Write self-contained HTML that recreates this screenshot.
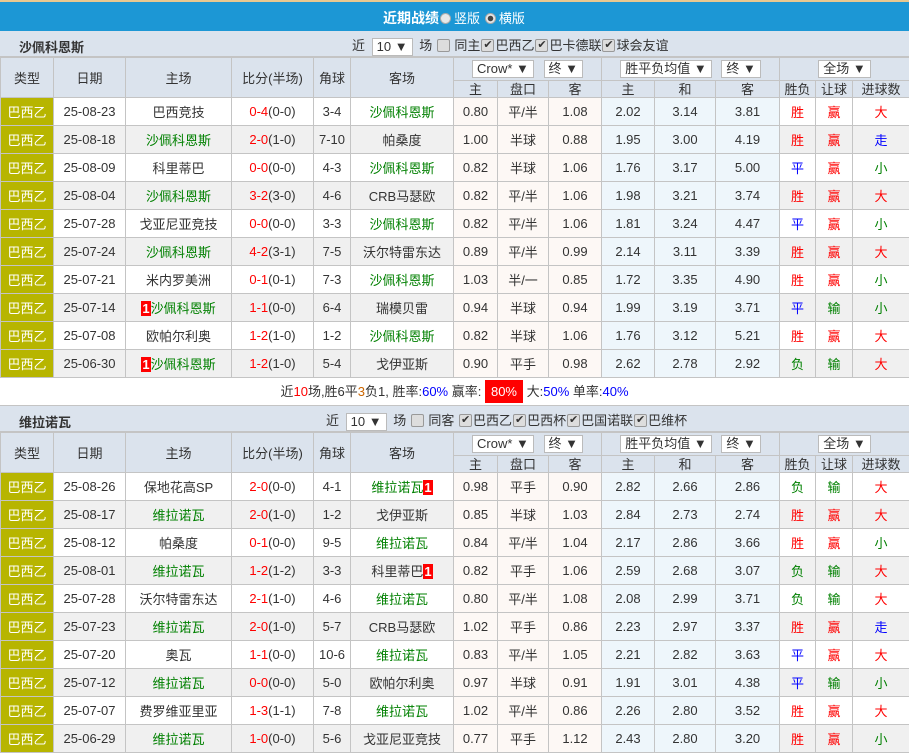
<!DOCTYPE html>
<html><head><meta charset="utf-8"><style>
*{margin:0;padding:0;box-sizing:border-box}
body{width:909px;height:755px;overflow:hidden;background:#fff;font-family:"Liberation Sans","Noto Sans CJK SC",sans-serif;font-size:13px;color:#333}
.top{height:31px;background:#1c97d5;border-top:2px solid #e8c890;color:#fff;font-weight:bold;font-size:14px;position:relative}
.top .t{position:absolute;left:383px;top:6px;white-space:nowrap}
.top .n{font-weight:normal;font-size:13px}
.rad{display:inline-block;width:11px;height:11px;border-radius:50%;background:#e8e8e8;border:1px solid #aaa;vertical-align:-1px;margin:0 3px 0 1px}
.rad.on{background:radial-gradient(circle,#444 0 2.5px,#e8e8e8 3px)}
.sec{height:26px;background:#dbe3ed;position:relative;border-bottom:1px solid #c4c4c4}
.sec .nm{position:absolute;left:19px;top:6px;font-weight:bold;color:#333;font-size:13px}
.sec .opt{position:absolute;top:4px;white-space:nowrap;font-size:13px}
.sel{display:inline-block;background:#fff;border:1px solid #bbb;height:18px;line-height:16px;padding:0 4px;font-size:13px;vertical-align:middle;margin:0 3px}
.cb{display:inline-block;width:13px;height:13px;border:1px solid #999;border-radius:2px;background:#ddd;vertical-align:-2px;font-size:11px;line-height:11px;text-align:center;color:#333;margin:0 1px;overflow:hidden}
table{border-collapse:collapse;table-layout:fixed;width:909px}
td{border:1px solid #c4c4c4;text-align:center;height:28px;white-space:nowrap;overflow:hidden;padding:0}
tr.h td{background:#dbe3ed;height:23px}
tr.h2 td{background:#dbe3ed;height:17px;line-height:15px}
tr.g td{background:#f0f0f0}
td.ty{background:#b7b500!important;color:#fff}
td.p{background:#fdf8f5!important}
td.b{background:#eef6fb!important}
.gr{color:#008000}.r{color:#f00}.bl{color:#00f}
.bd{background:#f00;color:#fff;font-weight:bold;padding:0 1px}
.sum{height:28px;line-height:28px;text-align:center;border-bottom:1px solid #c4c4c4;font-size:13px}
.sum .rb{background:#f00;color:#fff;padding:4px 6px}
</style></head><body>
<div class="top"><div class="t">近期战绩<span class="rad"></span><span class="n">竖版</span> <span class="rad on"></span><span class="n">横版</span></div></div>
<div class="sec"><span class="nm">沙佩科恩斯</span><span class="opt" style="left:352px">近 <span class="sel">10 ▼</span> 场 <span class="cb"></span> 同主<span class="cb">✔</span>巴西乙<span class="cb">✔</span>巴卡德联<span class="cb">✔</span>球会友谊</span></div>
<table>
<colgroup><col style="width:53px"><col style="width:72px"><col style="width:106px"><col style="width:82px"><col style="width:37px"><col style="width:103px"><col style="width:44px"><col style="width:51px"><col style="width:53px"><col style="width:53px"><col style="width:61px"><col style="width:64px"><col style="width:36px"><col style="width:37px"><col style="width:57px"></colgroup>
<tr class="h"><td rowspan="2">类型</td><td rowspan="2">日期</td><td rowspan="2">主场</td><td rowspan="2">比分(半场)</td><td rowspan="2">角球</td><td rowspan="2">客场</td><td colspan="3"><span class="sel">Crow* ▼</span> <span class="sel">终 ▼</span></td><td colspan="3"><span class="sel">胜平负均值 ▼</span> <span class="sel">终 ▼</span></td><td colspan="3"><span class="sel">全场 ▼</span></td></tr>
<tr class="h2"><td>主</td><td>盘口</td><td>客</td><td>主</td><td>和</td><td>客</td><td>胜负</td><td>让球</td><td>进球数</td></tr>
<tr><td class="ty">巴西乙</td><td>25-08-23</td><td>巴西竞技</td><td><span class="r">0-4</span>(0-0)</td><td>3-4</td><td class="gr">沙佩科恩斯</td><td class="p">0.80</td><td class="p">平/半</td><td class="p">1.08</td><td class="b">2.02</td><td class="b">3.14</td><td class="b">3.81</td><td class="r">胜</td><td class="r">赢</td><td class="r">大</td></tr>
<tr class="g"><td class="ty">巴西乙</td><td>25-08-18</td><td class="gr">沙佩科恩斯</td><td><span class="r">2-0</span>(1-0)</td><td>7-10</td><td>帕桑度</td><td class="p">1.00</td><td class="p">半球</td><td class="p">0.88</td><td class="b">1.95</td><td class="b">3.00</td><td class="b">4.19</td><td class="r">胜</td><td class="r">赢</td><td class="bl">走</td></tr>
<tr><td class="ty">巴西乙</td><td>25-08-09</td><td>科里蒂巴</td><td><span class="r">0-0</span>(0-0)</td><td>4-3</td><td class="gr">沙佩科恩斯</td><td class="p">0.82</td><td class="p">半球</td><td class="p">1.06</td><td class="b">1.76</td><td class="b">3.17</td><td class="b">5.00</td><td class="bl">平</td><td class="r">赢</td><td class="gr">小</td></tr>
<tr class="g"><td class="ty">巴西乙</td><td>25-08-04</td><td class="gr">沙佩科恩斯</td><td><span class="r">3-2</span>(3-0)</td><td>4-6</td><td>CRB马瑟欧</td><td class="p">0.82</td><td class="p">平/半</td><td class="p">1.06</td><td class="b">1.98</td><td class="b">3.21</td><td class="b">3.74</td><td class="r">胜</td><td class="r">赢</td><td class="r">大</td></tr>
<tr><td class="ty">巴西乙</td><td>25-07-28</td><td>戈亚尼亚竞技</td><td><span class="r">0-0</span>(0-0)</td><td>3-3</td><td class="gr">沙佩科恩斯</td><td class="p">0.82</td><td class="p">平/半</td><td class="p">1.06</td><td class="b">1.81</td><td class="b">3.24</td><td class="b">4.47</td><td class="bl">平</td><td class="r">赢</td><td class="gr">小</td></tr>
<tr class="g"><td class="ty">巴西乙</td><td>25-07-24</td><td class="gr">沙佩科恩斯</td><td><span class="r">4-2</span>(3-1)</td><td>7-5</td><td>沃尔特雷东达</td><td class="p">0.89</td><td class="p">平/半</td><td class="p">0.99</td><td class="b">2.14</td><td class="b">3.11</td><td class="b">3.39</td><td class="r">胜</td><td class="r">赢</td><td class="r">大</td></tr>
<tr><td class="ty">巴西乙</td><td>25-07-21</td><td>米内罗美洲</td><td><span class="r">0-1</span>(0-1)</td><td>7-3</td><td class="gr">沙佩科恩斯</td><td class="p">1.03</td><td class="p">半/一</td><td class="p">0.85</td><td class="b">1.72</td><td class="b">3.35</td><td class="b">4.90</td><td class="r">胜</td><td class="r">赢</td><td class="gr">小</td></tr>
<tr class="g"><td class="ty">巴西乙</td><td>25-07-14</td><td class="gr"><span class="bd">1</span>沙佩科恩斯</td><td><span class="r">1-1</span>(0-0)</td><td>6-4</td><td>瑞模贝雷</td><td class="p">0.94</td><td class="p">半球</td><td class="p">0.94</td><td class="b">1.99</td><td class="b">3.19</td><td class="b">3.71</td><td class="bl">平</td><td class="gr">输</td><td class="gr">小</td></tr>
<tr><td class="ty">巴西乙</td><td>25-07-08</td><td>欧帕尔利奥</td><td><span class="r">1-2</span>(1-0)</td><td>1-2</td><td class="gr">沙佩科恩斯</td><td class="p">0.82</td><td class="p">半球</td><td class="p">1.06</td><td class="b">1.76</td><td class="b">3.12</td><td class="b">5.21</td><td class="r">胜</td><td class="r">赢</td><td class="r">大</td></tr>
<tr class="g"><td class="ty">巴西乙</td><td>25-06-30</td><td class="gr"><span class="bd">1</span>沙佩科恩斯</td><td><span class="r">1-2</span>(1-0)</td><td>5-4</td><td>戈伊亚斯</td><td class="p">0.90</td><td class="p">平手</td><td class="p">0.98</td><td class="b">2.62</td><td class="b">2.78</td><td class="b">2.92</td><td class="gr">负</td><td class="gr">输</td><td class="r">大</td></tr>
</table>
<div class="sum">近<span class="r">10</span>场,胜6平<span style="color:#c60">3</span>负1, 胜率:<span class="bl">60%</span> 赢率: <span class="rb">80%</span> 大:<span class="bl">50%</span> 单率:<span class="bl">40%</span></div>
<div class="sec"><span class="nm">维拉诺瓦</span><span class="opt" style="left:326px">近 <span class="sel">10 ▼</span> 场 <span class="cb"></span> 同客 <span class="cb">✔</span>巴西乙<span class="cb">✔</span>巴西杯<span class="cb">✔</span>巴国诺联<span class="cb">✔</span>巴维杯</span></div>
<table>
<colgroup><col style="width:53px"><col style="width:72px"><col style="width:106px"><col style="width:82px"><col style="width:37px"><col style="width:103px"><col style="width:44px"><col style="width:51px"><col style="width:53px"><col style="width:53px"><col style="width:61px"><col style="width:64px"><col style="width:36px"><col style="width:37px"><col style="width:57px"></colgroup>
<tr class="h"><td rowspan="2">类型</td><td rowspan="2">日期</td><td rowspan="2">主场</td><td rowspan="2">比分(半场)</td><td rowspan="2">角球</td><td rowspan="2">客场</td><td colspan="3"><span class="sel">Crow* ▼</span> <span class="sel">终 ▼</span></td><td colspan="3"><span class="sel">胜平负均值 ▼</span> <span class="sel">终 ▼</span></td><td colspan="3"><span class="sel">全场 ▼</span></td></tr>
<tr class="h2"><td>主</td><td>盘口</td><td>客</td><td>主</td><td>和</td><td>客</td><td>胜负</td><td>让球</td><td>进球数</td></tr>
<tr><td class="ty">巴西乙</td><td>25-08-26</td><td>保地花高SP</td><td><span class="r">2-0</span>(0-0)</td><td>4-1</td><td class="gr">维拉诺瓦<span class="bd">1</span></td><td class="p">0.98</td><td class="p">平手</td><td class="p">0.90</td><td class="b">2.82</td><td class="b">2.66</td><td class="b">2.86</td><td class="gr">负</td><td class="gr">输</td><td class="r">大</td></tr>
<tr class="g"><td class="ty">巴西乙</td><td>25-08-17</td><td class="gr">维拉诺瓦</td><td><span class="r">2-0</span>(1-0)</td><td>1-2</td><td>戈伊亚斯</td><td class="p">0.85</td><td class="p">半球</td><td class="p">1.03</td><td class="b">2.84</td><td class="b">2.73</td><td class="b">2.74</td><td class="r">胜</td><td class="r">赢</td><td class="r">大</td></tr>
<tr><td class="ty">巴西乙</td><td>25-08-12</td><td>帕桑度</td><td><span class="r">0-1</span>(0-0)</td><td>9-5</td><td class="gr">维拉诺瓦</td><td class="p">0.84</td><td class="p">平/半</td><td class="p">1.04</td><td class="b">2.17</td><td class="b">2.86</td><td class="b">3.66</td><td class="r">胜</td><td class="r">赢</td><td class="gr">小</td></tr>
<tr class="g"><td class="ty">巴西乙</td><td>25-08-01</td><td class="gr">维拉诺瓦</td><td><span class="r">1-2</span>(1-2)</td><td>3-3</td><td>科里蒂巴<span class="bd">1</span></td><td class="p">0.82</td><td class="p">平手</td><td class="p">1.06</td><td class="b">2.59</td><td class="b">2.68</td><td class="b">3.07</td><td class="gr">负</td><td class="gr">输</td><td class="r">大</td></tr>
<tr><td class="ty">巴西乙</td><td>25-07-28</td><td>沃尔特雷东达</td><td><span class="r">2-1</span>(1-0)</td><td>4-6</td><td class="gr">维拉诺瓦</td><td class="p">0.80</td><td class="p">平/半</td><td class="p">1.08</td><td class="b">2.08</td><td class="b">2.99</td><td class="b">3.71</td><td class="gr">负</td><td class="gr">输</td><td class="r">大</td></tr>
<tr class="g"><td class="ty">巴西乙</td><td>25-07-23</td><td class="gr">维拉诺瓦</td><td><span class="r">2-0</span>(1-0)</td><td>5-7</td><td>CRB马瑟欧</td><td class="p">1.02</td><td class="p">平手</td><td class="p">0.86</td><td class="b">2.23</td><td class="b">2.97</td><td class="b">3.37</td><td class="r">胜</td><td class="r">赢</td><td class="bl">走</td></tr>
<tr><td class="ty">巴西乙</td><td>25-07-20</td><td>奥瓦</td><td><span class="r">1-1</span>(0-0)</td><td>10-6</td><td class="gr">维拉诺瓦</td><td class="p">0.83</td><td class="p">平/半</td><td class="p">1.05</td><td class="b">2.21</td><td class="b">2.82</td><td class="b">3.63</td><td class="bl">平</td><td class="r">赢</td><td class="r">大</td></tr>
<tr class="g"><td class="ty">巴西乙</td><td>25-07-12</td><td class="gr">维拉诺瓦</td><td><span class="r">0-0</span>(0-0)</td><td>5-0</td><td>欧帕尔利奥</td><td class="p">0.97</td><td class="p">半球</td><td class="p">0.91</td><td class="b">1.91</td><td class="b">3.01</td><td class="b">4.38</td><td class="bl">平</td><td class="gr">输</td><td class="gr">小</td></tr>
<tr><td class="ty">巴西乙</td><td>25-07-07</td><td>费罗维亚里亚</td><td><span class="r">1-3</span>(1-1)</td><td>7-8</td><td class="gr">维拉诺瓦</td><td class="p">1.02</td><td class="p">平/半</td><td class="p">0.86</td><td class="b">2.26</td><td class="b">2.80</td><td class="b">3.52</td><td class="r">胜</td><td class="r">赢</td><td class="r">大</td></tr>
<tr class="g"><td class="ty">巴西乙</td><td>25-06-29</td><td class="gr">维拉诺瓦</td><td><span class="r">1-0</span>(0-0)</td><td>5-6</td><td>戈亚尼亚竞技</td><td class="p">0.77</td><td class="p">平手</td><td class="p">1.12</td><td class="b">2.43</td><td class="b">2.80</td><td class="b">3.20</td><td class="r">胜</td><td class="r">赢</td><td class="gr">小</td></tr>
</table>
</body></html>
